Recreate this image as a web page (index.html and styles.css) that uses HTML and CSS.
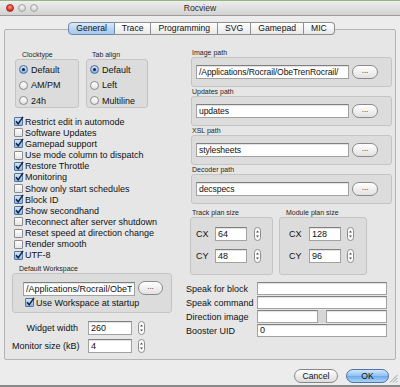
FILE: index.html
```html
<!DOCTYPE html>
<html>
<head>
<meta charset="utf-8">
<title>Rocview</title>
<link rel="stylesheet" href="styles.css">
</head>
<body>
<div class="window">
  <div class="titlebar">
    <div class="lights"><span class="light red"></span><span class="light"></span><span class="light"></span></div>
    <div class="title">Rocview</div>
  </div>

  <div class="pane">
    <div class="tabs">
      <span class="tab sel">General</span><span class="tab">Trace</span><span class="tab">Programming</span><span class="tab">SVG</span><span class="tab">Gamepad</span><span class="tab">MIC</span>
    </div>

    <div class="cols">
      <div class="left">
        <div class="groups">
          <div class="group">
            <div class="glabel gl7">Clocktype</div>
            <div class="box radiobox clock">
              <div class="radio"><span class="rb on"></span>Default</div>
              <div class="radio"><span class="rb"></span>AM/PM</div>
              <div class="radio"><span class="rb"></span>24h</div>
            </div>
          </div>
          <div class="group">
            <div class="glabel gl6">Tab align</div>
            <div class="box radiobox tabalign">
              <div class="radio"><span class="rb on"></span>Default</div>
              <div class="radio"><span class="rb"></span>Left</div>
              <div class="radio"><span class="rb"></span>Multiline</div>
            </div>
          </div>
        </div>

        <div class="checks">
          <div class="check"><span class="cb on"><svg viewBox="0 0 10 10" width="10" height="10"><path d="M2 5.2 L4.2 7.8 L9 0.8" /></svg></span>Restrict edit in automode</div>
          <div class="check"><span class="cb"></span>Software Updates</div>
          <div class="check"><span class="cb on"><svg viewBox="0 0 10 10" width="10" height="10"><path d="M2 5.2 L4.2 7.8 L9 0.8" /></svg></span>Gamepad support</div>
          <div class="check"><span class="cb"></span>Use mode column to dispatch</div>
          <div class="check"><span class="cb on"><svg viewBox="0 0 10 10" width="10" height="10"><path d="M2 5.2 L4.2 7.8 L9 0.8" /></svg></span>Restore Throttle</div>
          <div class="check"><span class="cb on"><svg viewBox="0 0 10 10" width="10" height="10"><path d="M2 5.2 L4.2 7.8 L9 0.8" /></svg></span>Monitoring</div>
          <div class="check"><span class="cb"></span>Show only start schedules</div>
          <div class="check"><span class="cb on"><svg viewBox="0 0 10 10" width="10" height="10"><path d="M2 5.2 L4.2 7.8 L9 0.8" /></svg></span>Block ID</div>
          <div class="check"><span class="cb on"><svg viewBox="0 0 10 10" width="10" height="10"><path d="M2 5.2 L4.2 7.8 L9 0.8" /></svg></span>Show secondhand</div>
          <div class="check"><span class="cb"></span>Reconnect after server shutdown</div>
          <div class="check"><span class="cb"></span>Reset speed at direction change</div>
          <div class="check"><span class="cb"></span>Render smooth</div>
          <div class="check"><span class="cb on"><svg viewBox="0 0 10 10" width="10" height="10"><path d="M2 5.2 L4.2 7.8 L9 0.8" /></svg></span>UTF-8</div>
        </div>

        <div class="glabel gl7 wslabel">Default Workspace</div>
        <div class="box wsbox">
          <div class="wsrow">
            <div class="field wsfield"><span class="clipped">/Applications/Rocrail/ObeT</span></div>
            <div class="dots">...</div>
          </div>
          <div class="check wscheck"><span class="cb on"><svg viewBox="0 0 10 10" width="10" height="10"><path d="M2 5.2 L4.2 7.8 L9 0.8" /></svg></span>Use Workspace at startup</div>
        </div>

        <div class="formrows">
          <div class="frow"><span class="flabel">Widget width</span><div class="field small">260</div><svg class="spin" viewBox="0 0 7 14" width="7" height="14"><rect x="0.5" y="0.5" width="6" height="13" rx="3" /><path class="arr" d="M2 5.5 L3.5 3.5 L5 5.5Z M2 8.5 L3.5 10.5 L5 8.5Z" /></svg></div>
          <div class="frow"><span class="flabel">Monitor size (kB)</span><div class="field small">4</div><svg class="spin" viewBox="0 0 7 14" width="7" height="14"><rect x="0.5" y="0.5" width="6" height="13" rx="3" /><path class="arr" d="M2 5.5 L3.5 3.5 L5 5.5Z M2 8.5 L3.5 10.5 L5 8.5Z" /></svg></div>
        </div>
      </div>

      <div class="right">
        <div class="slabel-top first">Image path</div>
        <div class="box pbox">
          <div class="field pfield">/Applications/Rocrail/ObeTrenRocrail/</div>
          <div class="dots pdots">...</div>
        </div>
        <div class="slabel-top">Updates path</div>
        <div class="box pbox">
          <div class="field pfield">updates</div>
          <div class="dots pdots">...</div>
        </div>
        <div class="slabel-top">XSL path</div>
        <div class="box pbox">
          <div class="field pfield">stylesheets</div>
          <div class="dots pdots">...</div>
        </div>
        <div class="slabel-top">Decoder path</div>
        <div class="box pbox">
          <div class="field pfield">decspecs</div>
          <div class="dots pdots">...</div>
        </div>

        <div class="plans">
          <div class="plan track">
            <div class="slabel-top">Track plan size</div>
            <div class="box planbox">
              <div class="prow"><span class="plabel">CX</span><div class="field pnum">64</div><svg class="spin" viewBox="0 0 7 14" width="7" height="14"><rect x="0.5" y="0.5" width="6" height="13" rx="3" /><path class="arr" d="M2 5.5 L3.5 3.5 L5 5.5Z M2 8.5 L3.5 10.5 L5 8.5Z" /></svg></div>
              <div class="prow"><span class="plabel">CY</span><div class="field pnum">48</div><svg class="spin" viewBox="0 0 7 14" width="7" height="14"><rect x="0.5" y="0.5" width="6" height="13" rx="3" /><path class="arr" d="M2 5.5 L3.5 3.5 L5 5.5Z M2 8.5 L3.5 10.5 L5 8.5Z" /></svg></div>
            </div>
          </div>
          <div class="plan module">
            <div class="slabel-top">Module plan size</div>
            <div class="box planbox">
              <div class="prow"><span class="plabel">CX</span><div class="field pnum">128</div><svg class="spin" viewBox="0 0 7 14" width="7" height="14"><rect x="0.5" y="0.5" width="6" height="13" rx="3" /><path class="arr" d="M2 5.5 L3.5 3.5 L5 5.5Z M2 8.5 L3.5 10.5 L5 8.5Z" /></svg></div>
              <div class="prow"><span class="plabel">CY</span><div class="field pnum">96</div><svg class="spin" viewBox="0 0 7 14" width="7" height="14"><rect x="0.5" y="0.5" width="6" height="13" rx="3" /><path class="arr" d="M2 5.5 L3.5 3.5 L5 5.5Z M2 8.5 L3.5 10.5 L5 8.5Z" /></svg></div>
            </div>
          </div>
        </div>

        <div class="speak">
          <div class="srow"><span class="slabel">Speak for block</span><div class="field sfield"></div></div>
          <div class="srow"><span class="slabel">Speak command</span><div class="field sfield"></div></div>
          <div class="srow"><span class="slabel">Direction image</span><div class="field sfield half"></div><span class="sgap"></span><div class="field sfield half"></div></div>
          <div class="srow"><span class="slabel">Booster UID</span><div class="field sfield">0</div></div>
        </div>
      </div>
    </div>
  </div>

  <div class="buttons">
    <div class="btn cancel">Cancel</div>
    <div class="btn ok">OK</div>
  </div>

  <svg class="grip" viewBox="0 0 9 9" width="9" height="9"><path d="M1 8.5 L8.5 1 M4 8.5 L8.5 4 M7 8.5 L8.5 7" /></svg>
</div>
</body>
</html>
```

FILE: styles.css
```css
* { box-sizing: border-box; }
html, body { margin: 0; padding: 0; }
body {
  width: 400px;
  height: 387px;
  overflow: hidden;
  background: #ececec;
  font-family: "Liberation Sans", Arial, sans-serif;
  font-size: 9px;
  color: #111;
}
.window {
  position: relative;
  height: 387px;
  border-bottom: 2px solid #8a8a8a;
}

/* title bar */
.titlebar {
  height: 16px;
  border-top: 1px solid #93b684;
  border-bottom: 1px solid #9c9c9c;
  background: linear-gradient(#eeeeee, #d2d2d2);
  display: flex;
  align-items: center;
}
.lights { display: flex; gap: 4px; width: 46px; padding-left: 6px; }
.light {
  width: 8px; height: 8px; border-radius: 50%;
  background: radial-gradient(circle at 50% 35%, #f4f4f4, #c2c2c2);
  border: 1px solid #a6a6a6;
}
.light.red {
  background: radial-gradient(circle at 50% 35%, #ff9b8c, #d9291d 70%);
  border-color: #a52a20;
}
.title {
  flex: 1;
  text-align: center;
  font-size: 8.6px;
  color: #2a2a2a;
  margin-right: 46px;
}

/* tab pane */
.pane {
  margin: 13px 4px 0;
  height: 331px;
  border: 1px solid #b4b4b4;
  border-radius: 2px;
  background: #e6e6e6;
}
.tabs {
  display: flex;
  justify-content: center;
  margin-top: -8px;
  padding-left: 3px;
  height: 13px;
}
.tab {
  height: 13px;
  line-height: 11px;
  padding: 0 7px;
  border: 1px solid #8f8f8f;
  border-left: none;
  background: linear-gradient(#ffffff, #e8e8e8);
  font-size: 8.6px;
  color: #111;
  white-space: nowrap;
}
.tab:first-child { border-left: 1px solid #8f8f8f; border-radius: 4px 0 0 4px; }
.tab:last-child { border-radius: 0 4px 4px 0; }
.tab.sel {
  background: linear-gradient(#dceaf9, #b6d3f2 55%, #a6c9ef);
  border-color: #6f88a8;
}

.cols {
  display: grid;
  grid-template-columns: 170px 202px;
  column-gap: 8px;
  padding-left: 7px;
}

/* shared widgets */
.box {
  background: #dcdcdc;
  border: 1px solid #c4c4c4;
  border-radius: 3px;
}
.glabel, .slabel-top {
  font-size: 7px;
  line-height: 9px;
  height: 9px;
  white-space: nowrap;
  color: #1e1e1e;
}
.gl7 { padding-left: 7px; }
.gl6 { padding-left: 6px; }
.field {
  height: 14px;
  background: #ffffff;
  border: 1px solid #a2a2a2;
  border-top-color: #7f7f7f;
  box-shadow: inset 0 1px 1px rgba(0, 0, 0, 0.12);
  padding: 0 2px;
  line-height: 12px;
  white-space: nowrap;
  overflow: hidden;
  text-overflow: clip;
  font-size: 9px;
  color: #111;
}
.clipped { display: block; overflow: hidden; }
.dots {
  height: 14px;
  border-radius: 7px;
  border: 1px solid #8a8a8a;
  background: linear-gradient(#ffffff, #e2e2e2);
  text-align: center;
  line-height: 10px;
  font-size: 8px;
  flex: none;
}
.spin { flex: none; display: block; }
.spin rect { fill: #fbfbfb; stroke: #8c8c8c; stroke-width: 1; }
.spin .arr { fill: #555; }

.rb {
  width: 9px; height: 9px; border-radius: 50%;
  border: 1px solid #8a8a8a;
  background: linear-gradient(#ffffff, #e3e3e3);
  flex: none;
  display: flex; align-items: center; justify-content: center;
}
.rb.on {
  border-color: #4b6b98;
  background: linear-gradient(#cfe2f8, #7fb2ea);
}
.rb.on::after {
  content: "";
  width: 3px; height: 3px; border-radius: 50%;
  background: #14233b;
}
.cb {
  width: 9px; height: 9px;
  border: 1px solid #8c8c8c;
  border-radius: 1px;
  background: linear-gradient(#ffffff, #e4e4e4);
  flex: none;
  position: relative;
}
.cb.on {
  border-color: #56749a;
  background: linear-gradient(#d2e4f8, #86b6ea);
}
.cb svg {
  position: absolute;
  left: -1px; top: -2px;
  overflow: visible;
}
.cb svg path { fill: none; stroke: #13223a; stroke-width: 1.5; }

/* left column */
.groups { display: flex; gap: 7px; margin: 15px 0 0 3px; }
.radiobox { height: 49px; padding: 2px 0 0 3px; }
.clock { width: 64px; }
.tabalign { width: 62px; }
.radio { display: flex; align-items: center; gap: 3px; height: 15.5px; white-space: nowrap; }

.checks { margin: 8px 0 0 2px; }
.check { display: flex; align-items: center; gap: 2px; height: 11.17px; white-space: nowrap; }

.wslabel { margin-top: 3px; }
.wsbox { width: 160px; height: 40px; padding: 8px 0 0 10px; }
.wsrow { display: flex; gap: 3px; }
.wsfield { width: 112px; }
.wsrow .dots { width: 25px; margin-top: -1px; }
.wscheck { padding-left: 2px; margin-top: 1px; }

.formrows { margin-top: 8px; display: flex; flex-direction: column; gap: 4px; }
.frow { display: flex; align-items: center; height: 14px; }
.flabel { width: 66px; text-align: right; margin-right: 10px; white-space: nowrap; }
.small { width: 44px; }
.frow .spin { margin-left: 6px; }

/* right column */
.slabel-top { padding-left: 2px; }
.first { margin-top: 13px; }
.pbox { height: 30px; margin-left: 1px; padding: 7px 0 0 4px; display: flex; gap: 3px; }
.pfield { width: 153px; font-size: 8.6px; letter-spacing: -0.1px; }
.pdots { width: 26px; }

.plans { display: flex; gap: 6px; margin-top: 4px; }
.track { width: 83px; }
.module { width: 88px; }
.module .slabel-top { padding-left: 7px; }
.planbox { height: 58px; padding-top: 9px; display: flex; flex-direction: column; gap: 8px; }
.track .planbox { padding-left: 5px; }
.module .planbox { padding-left: 9px; }
.prow { display: flex; align-items: center; height: 14px; }
.plabel { width: 19px; font-size: 9px; }
.module .plabel { width: 20px; }
.pnum { width: 32px; }
.track .spin { margin-left: 7px; }
.module .spin { margin-left: 6px; }

.speak { margin: 7px 0 0 -4px; display: flex; flex-direction: column; gap: 1px; }
.srow { display: flex; align-items: center; height: 13px; }
.slabel { width: 71px; white-space: nowrap; }
.sfield { width: 130px; height: 13px; line-height: 11px; }
.sfield.half { width: 61px; }
.sgap { width: 8px; height: 13px; background: #d6d6d6; }

/* buttons */
.buttons { display: flex; justify-content: flex-end; gap: 8px; margin-top: 9px; padding-right: 11px; }
.btn {
  height: 14px;
  border-radius: 7px;
  border: 1px solid #878787;
  background: linear-gradient(#ffffff, #dcdcdc);
  text-align: center;
  line-height: 12px;
  font-size: 8.6px;
  color: #111;
}
.cancel { width: 44px; }
.ok {
  width: 43px;
  border-color: #4c74a6;
  background: linear-gradient(#d3e7fc, #92c1f1 48%, #6daaec 52%, #a9d3fa);
}
.grip { position: absolute; right: 2px; bottom: 2px; }
.grip path { stroke: #9a9a9a; stroke-width: 1; fill: none; }
```
